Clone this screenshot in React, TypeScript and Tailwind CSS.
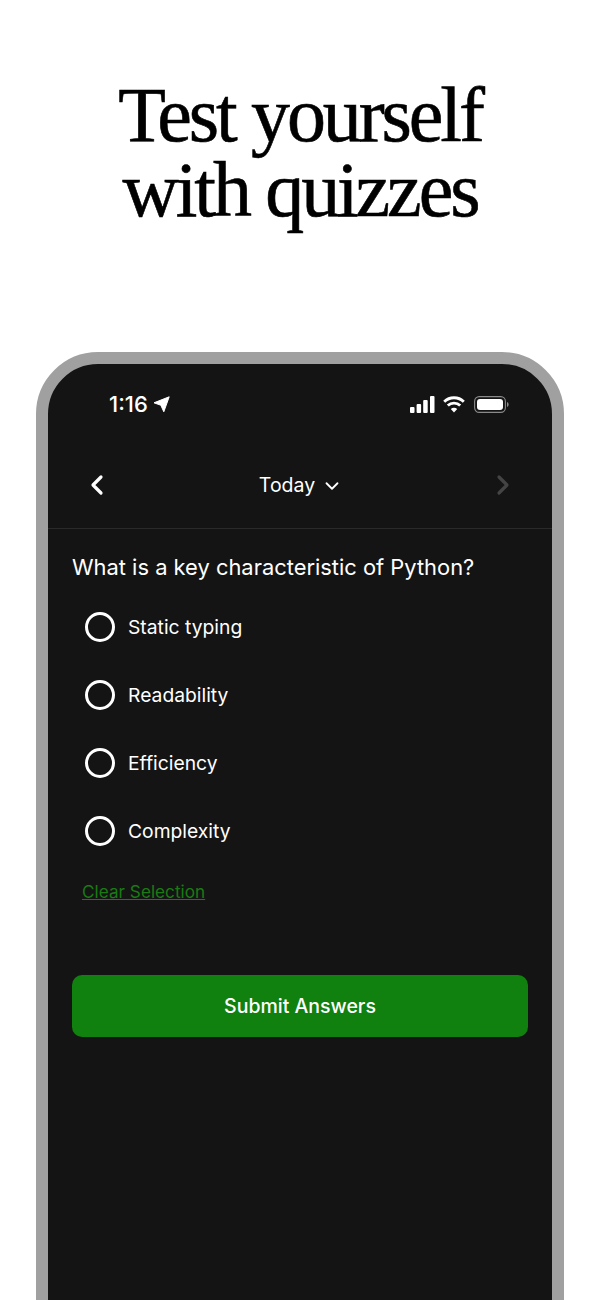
import { ChevronLeft, ChevronRight, ChevronDown } from "lucide-react";

const OPTIONS = ["Static typing", "Readability", "Efficiency", "Complexity"];

function LocationArrow() {
  return (
    <svg width="17" height="17" viewBox="0 0 17 17" fill="white" stroke="white" strokeWidth="1" strokeLinejoin="round">
      <path d="M16.2 0.8 L1 6.8 L7.8 9.2 L10.8 15.8 Z" />
    </svg>
  );
}

function Signal() {
  return (
    <svg width="25" height="17" viewBox="0 0 25 17" fill="white">
      <rect x="0" y="11" width="4.5" height="6" rx="1" />
      <rect x="6.6" y="8" width="4.5" height="9" rx="1" />
      <rect x="13.2" y="4" width="4.5" height="13" rx="1" />
      <rect x="20" y="0" width="4.5" height="17" rx="1" />
    </svg>
  );
}

function Wifi() {
  return (
    <svg width="22" height="17" viewBox="0 0 22 17" fill="none" stroke="white" strokeWidth="2.8" className="mr-[1px]">
      <path d="M1.2 5.8 C6.6 0.4 15.4 0.4 20.8 5.8" />
      <path d="M4.8 9.6 C8.2 6.2 13.8 6.2 17.2 9.6" />
      <path d="M11 16.6 L7.8 13 C9.6 11.4 12.4 11.4 14.2 13 Z" fill="white" stroke="none" />
    </svg>
  );
}

function Battery() {
  return (
    <svg width="35" height="17" viewBox="0 0 35 17" fill="none">
      <rect x="0.6" y="0.6" width="30.8" height="15.8" rx="4.6" stroke="#8a8a8a" strokeWidth="1.1" />
      <rect x="3" y="3" width="26" height="11" rx="3" fill="white" />
      <path d="M33 6 C34.2 6.4 34.6 7.4 34.6 8.5 C34.6 9.6 34.2 10.6 33 11 Z" fill="#8a8a8a" />
    </svg>
  );
}

export default function App() {
  return (
    <div className="h-[1300px] w-[600px] overflow-hidden bg-white font-['Inter',sans-serif]">
      <h1 className="pt-[77px] text-center font-['Liberation_Serif',serif] text-[78px] leading-[75px] tracking-[-3.1px] text-black [-webkit-text-stroke:0.6px_black]">
        Test yourself
        <br />
        with quizzes
      </h1>

      <div className="mx-[36px] mt-[125px] h-[1000px] rounded-t-[62px] border-[12px] border-[#a0a0a0] bg-[#141414]">
        {/* status bar */}
        <div className="flex h-[81px] items-center justify-between pl-[61px] pr-[43px]">
          <div className="flex items-center gap-[5px] text-[22px] font-medium text-white">
            <span>1:16</span>
            <LocationArrow />
          </div>
          <div className="flex items-center gap-[8px]">
            <Signal />
            <Wifi />
            <Battery />
          </div>
        </div>

        {/* nav */}
        <div className="flex h-[84px] items-center justify-between border-b border-[#2a2a2a] pb-[3px] pl-[33px] pr-[33px]">
          <ChevronLeft size={32} strokeWidth={2.4} className="text-white" />
          <div className="ml-[2px] flex items-center gap-[6px] pt-[1px] text-[19.5px] text-white">
            <span>Today</span>
            <ChevronDown size={22} strokeWidth={2} />
          </div>
          <ChevronRight size={32} strokeWidth={2.4} className="text-[#444444]" />
        </div>

        <div className="px-[24px] pt-[23px]">
          <p className="text-[21.9px] leading-[30px] text-white">What is a key characteristic of Python?</p>

          <div className="mt-[11px] flex flex-col">
            {OPTIONS.map((o) => (
              <div key={o} className="flex h-[68px] items-center gap-[13px] pl-[13px]">
                <span className="h-[30px] w-[30px] rounded-full border-[3px] border-white" />
                <span className="text-[19.3px] text-white">{o}</span>
              </div>
            ))}
          </div>

          <button className="ml-[10px] mt-[15px] block text-[17.2px] leading-[24px] text-[#1a7a14] underline">
            Clear Selection
          </button>

          <button className="mt-[71px] flex h-[62px] w-full items-center justify-center rounded-[10px] bg-[#10800f] pt-[1px] text-[19.5px] font-medium text-white">
            Submit Answers
          </button>
        </div>
      </div>
    </div>
  );
}
